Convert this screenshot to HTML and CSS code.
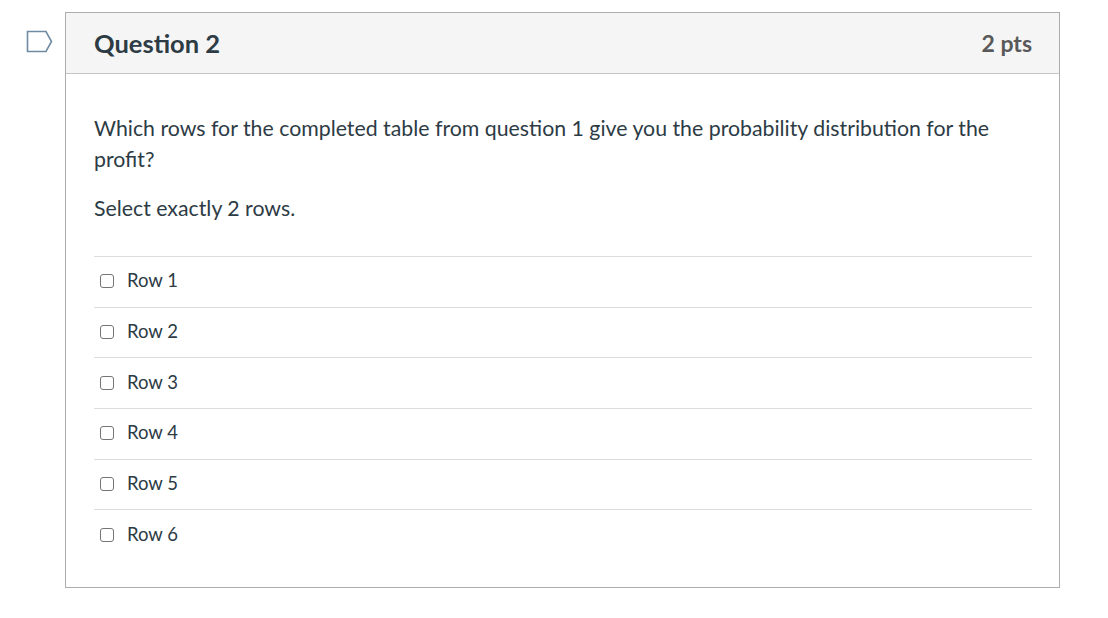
FILE: index.html
```html
<!DOCTYPE html>
<html>

<head>
  <meta http-equiv="Content-Type" content="text/html; charset=utf-8" />
  <title>Question 2</title>
  <link rel="stylesheet" href="styles.css">
</head>

<body>
  <div class="quiz">
    <div class="flag-col">
      <svg class="flag" width="27" height="23" viewBox="0 0 27 23">
        <path d="M1.5 1.5 H20 L25.5 11.5 L20 21.5 H1.5 Z" fill="none" stroke="#6f8ba3" stroke-width="1.6" stroke-linejoin="miter" />
      </svg>
    </div>
    <div class="question">
      <div class="question-header">
        <span class="question-name">Question 2</span>
        <span class="question-points">2 pts</span>
      </div>
      <div class="question-body">
        <div class="question-text">
          <p>Which rows for the completed table from question 1 give you the probability distribution for the profit?</p>
          <p>Select exactly 2 rows.</p>
        </div>
        <ul class="answers">
          <li class="answer"><span class="checkbox"></span><span class="answer-label">Row 1</span></li>
          <li class="answer"><span class="checkbox"></span><span class="answer-label">Row 2</span></li>
          <li class="answer"><span class="checkbox"></span><span class="answer-label">Row 3</span></li>
          <li class="answer"><span class="checkbox"></span><span class="answer-label">Row 4</span></li>
          <li class="answer"><span class="checkbox"></span><span class="answer-label">Row 5</span></li>
          <li class="answer"><span class="checkbox"></span><span class="answer-label">Row 6</span></li>
        </ul>
      </div>
    </div>
  </div>
</body>

</html>
```

FILE: styles.css
```css
body {
  margin: 0;
  background: #fff;
  color: #2d3b45;
  font-family: Lato, "Open Sans", sans-serif;
}

.quiz {
  display: flex;
  padding-top: 12px;
}

.flag-col {
  width: 65px;
  display: flex;
  justify-content: flex-start;
  padding-left: 26px;
  padding-top: 18px;
  box-sizing: border-box;
}

.flag {
  display: block;
}

.question {
  width: 995px;
  height: 576px;
  box-sizing: border-box;
  border: 1px solid #adadad;
}

.question-header {
  height: 60px;
  background: #f5f5f5;
  border-bottom: 1px solid #c7c7c7;
  display: flex;
  align-items: center;
  justify-content: space-between;
  padding: 0 27px 0 28px;
}

.question-name {
  font-size: 25.5px;
  font-weight: 700;
  color: #2d3b45;
}

.question-points {
  font-size: 23px;
  font-weight: 700;
  color: #595959;
}

.question-body {
  padding: 39px 27px 0 28px;
}

.question-text p {
  margin: 0 0 18px;
  font-size: 21.3px;
  line-height: 31px;
}

.answers {
  list-style: none;
  margin: 32px 0 0;
  padding: 0;
}

.answer {
  display: flex;
  align-items: center;
  height: 50.7px;
  padding-bottom: 3px;
  border-top: 1px solid #dcdcdc;
  box-sizing: border-box;
}

.checkbox {
  width: 14px;
  height: 14px;
  box-sizing: border-box;
  border: 1px solid #757575;
  border-radius: 3px;
  margin: 2px 13px 0 6px;
}

.answer-label {
  font-size: 18.5px;
}
```
